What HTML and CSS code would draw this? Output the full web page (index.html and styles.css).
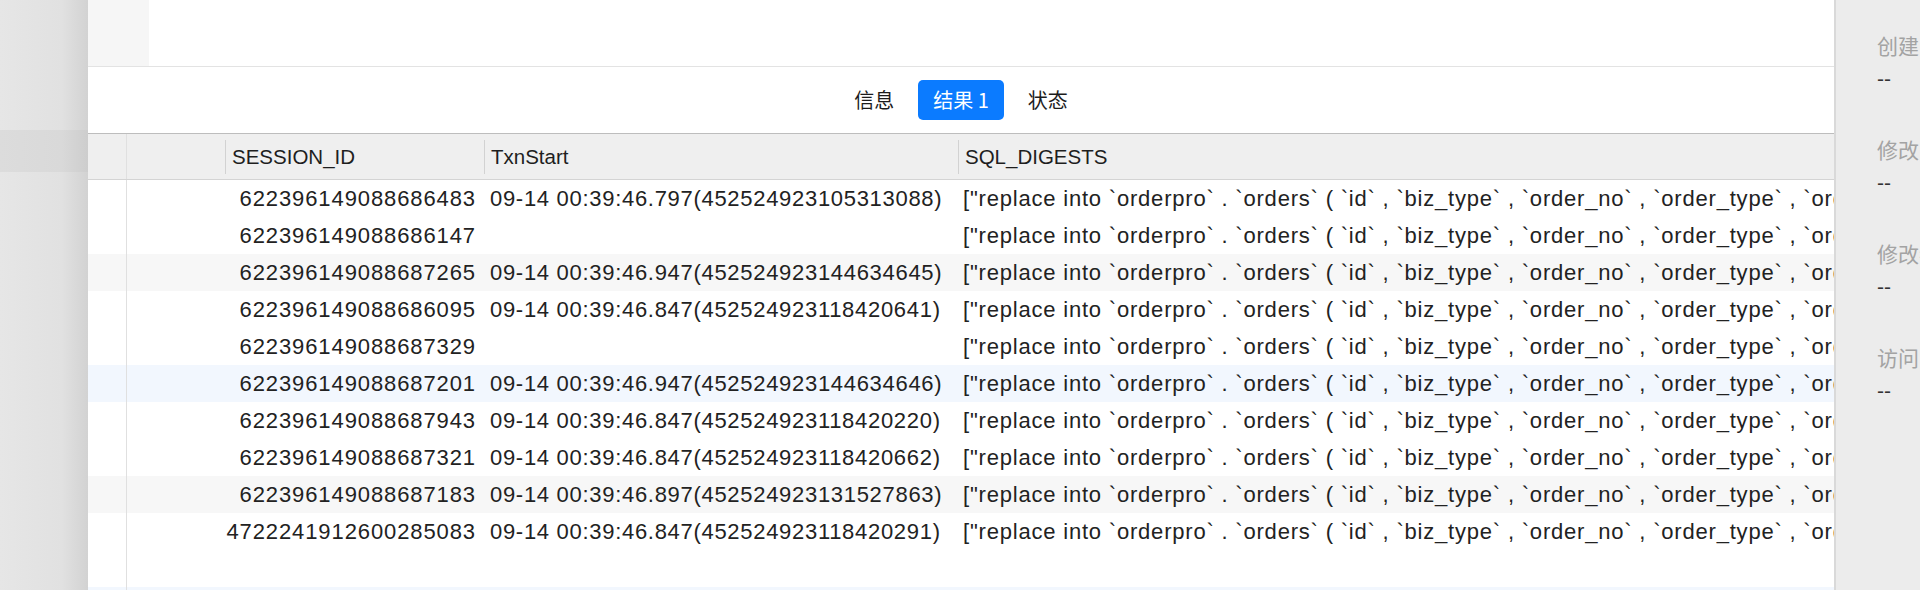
FILE: index.html
```html
<!DOCTYPE html>
<html>
<head>
    <meta charset="UTF-8">
    <title>结果 1</title>
    <link rel="stylesheet" href="styles.css">
</head>
<body>
    <div class="sidebar">
        <div class="sidebar-band"></div>
    </div>

    <div class="main">
        <div class="top-area">
            <div class="top-box"></div>
        </div>

        <div class="tab-bar">
            <div class="tab">信息</div>
            <div class="tab active">结果 1</div>
            <div class="tab">状态</div>
        </div>

        <div class="result-table">
            <div class="grid-row header">
                <div class="cell gutter"></div>
                <div class="cell"></div>
                <div class="cell"><span class="sep"></span>SESSION_ID</div>
                <div class="cell"><span class="sep"></span>TxnStart</div>
                <div class="cell"><span class="sep"></span>SQL_DIGESTS</div>
            </div>

            <div class="grid-row">
                <div class="cell gutter"></div><div class="cell"></div>
                <div class="cell num">622396149088686483</div>
                <div class="cell txt">09-14 00:39:46.797(452524923105313088)</div>
                <div class="cell txt sql">["replace into `orderpro` . `orders` ( `id` , `biz_type` , `order_no` , `order_type` , `ord</div>
            </div>
            <div class="grid-row">
                <div class="cell gutter"></div><div class="cell"></div>
                <div class="cell num">622396149088686147</div>
                <div class="cell txt"></div>
                <div class="cell txt sql">["replace into `orderpro` . `orders` ( `id` , `biz_type` , `order_no` , `order_type` , `ord</div>
            </div>
            <div class="grid-row stripe">
                <div class="cell gutter"></div><div class="cell"></div>
                <div class="cell num">622396149088687265</div>
                <div class="cell txt">09-14 00:39:46.947(452524923144634645)</div>
                <div class="cell txt sql">["replace into `orderpro` . `orders` ( `id` , `biz_type` , `order_no` , `order_type` , `ord</div>
            </div>
            <div class="grid-row">
                <div class="cell gutter"></div><div class="cell"></div>
                <div class="cell num">622396149088686095</div>
                <div class="cell txt">09-14 00:39:46.847(452524923118420641)</div>
                <div class="cell txt sql">["replace into `orderpro` . `orders` ( `id` , `biz_type` , `order_no` , `order_type` , `ord</div>
            </div>
            <div class="grid-row">
                <div class="cell gutter"></div><div class="cell"></div>
                <div class="cell num">622396149088687329</div>
                <div class="cell txt"></div>
                <div class="cell txt sql">["replace into `orderpro` . `orders` ( `id` , `biz_type` , `order_no` , `order_type` , `ord</div>
            </div>
            <div class="grid-row hover">
                <div class="cell gutter"></div><div class="cell"></div>
                <div class="cell num">622396149088687201</div>
                <div class="cell txt">09-14 00:39:46.947(452524923144634646)</div>
                <div class="cell txt sql">["replace into `orderpro` . `orders` ( `id` , `biz_type` , `order_no` , `order_type` , `ord</div>
            </div>
            <div class="grid-row">
                <div class="cell gutter"></div><div class="cell"></div>
                <div class="cell num">622396149088687943</div>
                <div class="cell txt">09-14 00:39:46.847(452524923118420220)</div>
                <div class="cell txt sql">["replace into `orderpro` . `orders` ( `id` , `biz_type` , `order_no` , `order_type` , `ord</div>
            </div>
            <div class="grid-row">
                <div class="cell gutter"></div><div class="cell"></div>
                <div class="cell num">622396149088687321</div>
                <div class="cell txt">09-14 00:39:46.847(452524923118420662)</div>
                <div class="cell txt sql">["replace into `orderpro` . `orders` ( `id` , `biz_type` , `order_no` , `order_type` , `ord</div>
            </div>
            <div class="grid-row stripe">
                <div class="cell gutter"></div><div class="cell"></div>
                <div class="cell num">622396149088687183</div>
                <div class="cell txt">09-14 00:39:46.897(452524923131527863)</div>
                <div class="cell txt sql">["replace into `orderpro` . `orders` ( `id` , `biz_type` , `order_no` , `order_type` , `ord</div>
            </div>
            <div class="grid-row">
                <div class="cell gutter"></div><div class="cell"></div>
                <div class="cell num">4722241912600285083</div>
                <div class="cell txt">09-14 00:39:46.847(452524923118420291)</div>
                <div class="cell txt sql">["replace into `orderpro` . `orders` ( `id` , `biz_type` , `order_no` , `order_type` , `ord</div>
            </div>
            <div class="grid-row">
                <div class="cell gutter"></div><div class="cell"></div>
                <div class="cell"></div><div class="cell"></div><div class="cell"></div>
            </div>
            <div class="grid-row hover">
                <div class="cell gutter"></div><div class="cell"></div>
                <div class="cell"></div><div class="cell"></div><div class="cell"></div>
            </div>
        </div>
    </div>

    <div class="info-panel">
        <div class="info-item">
            <div class="info-label">创建时间</div>
            <div class="info-value">--</div>
        </div>
        <div class="info-item">
            <div class="info-label">修改时间</div>
            <div class="info-value">--</div>
        </div>
        <div class="info-item">
            <div class="info-label">修改者</div>
            <div class="info-value">--</div>
        </div>
        <div class="info-item">
            <div class="info-label">访问时间</div>
            <div class="info-value">--</div>
        </div>
    </div>
</body>
</html>
```

FILE: styles.css
```css
body {
    margin: 0;
    height: 590px;
    display: flex;
    overflow: hidden;
    font-family: "Liberation Sans", "Noto Sans CJK SC", sans-serif;
    color: #222;
    background-color: #fff;
}

.sidebar {
    width: 88px;
    flex-shrink: 0;
    padding-top: 130px;
    box-sizing: border-box;
    background: linear-gradient(to right, #e6e6e6 0%, #e1e1e1 70%, #d2d2d2 100%);
}

.sidebar-band {
    height: 42px;
    background: linear-gradient(to right, #dcdcdc 0%, #d9d9d9 70%, #cdcdcd 100%);
}

.main {
    flex: 1;
    min-width: 0;
    display: flex;
    flex-direction: column;
    overflow: hidden;
}

.top-area {
    height: 66px;
    flex-shrink: 0;
    border-bottom: 1px solid #e3e3e3;
}

.top-box {
    width: 61px;
    height: 100%;
    background-color: #f6f6f6;
}

.tab-bar {
    height: 66px;
    flex-shrink: 0;
    display: flex;
    align-items: center;
    justify-content: center;
    gap: 9px;
}

.tab {
    height: 40px;
    line-height: 40px;
    padding: 0 15px;
    border-radius: 5px;
    font-family: "Noto Sans CJK SC", sans-serif;
    font-size: 20px;
    color: #1c1c1c;
}

.tab.active {
    background-color: #0b7bff;
    color: #fff;
}

.result-table {
    flex: 1;
    border-top: 1px solid #bdbdbd;
    overflow: hidden;
}

.grid-row {
    display: grid;
    grid-template-columns: 39px 98px 259px 474px 1fr;
    height: 37px;
}

.grid-row.header {
    height: 45px;
    background-color: #efefef;
    border-bottom: 1px solid #d4d4d4;
    font-size: 20.5px;
    color: #1e1e1e;
}

.grid-row.stripe {
    background-color: #f7f7f7;
}

.grid-row.hover {
    background-color: #f2f7fe;
}

.cell {
    display: flex;
    align-items: center;
    white-space: nowrap;
    overflow: hidden;
    min-width: 0;
}

.header .cell {
    gap: 6px;
}

.gutter {
    border-right: 1px solid #e0e0e0;
}

.sep {
    width: 1px;
    height: 34px;
    flex-shrink: 0;
    background-color: #d2d2d2;
}

.num,
.txt {
    font-size: 22px;
    letter-spacing: 0.7px;
    color: #222;
}

.num {
    justify-content: flex-end;
    padding-right: 8px;
    letter-spacing: 0.9px;
}

.txt {
    padding-left: 6px;
}

.sql {
    padding-left: 5px;
    letter-spacing: 0.8px;
}

.info-panel {
    width: 86px;
    flex-shrink: 0;
    box-sizing: border-box;
    padding: 30px 0 0 41px;
    background-color: #ececec;
    border-left: 2px solid #d9d9d9;
    overflow: hidden;
    white-space: nowrap;
}

.info-item {
    margin-bottom: 40px;
}

.info-label {
    font-family: "Noto Sans CJK SC", sans-serif;
    font-size: 21px;
    line-height: 30px;
    color: #a3a3a3;
}

.info-value {
    margin-top: 4px;
    font-size: 21px;
    line-height: 30px;
    color: #333;
}
```
